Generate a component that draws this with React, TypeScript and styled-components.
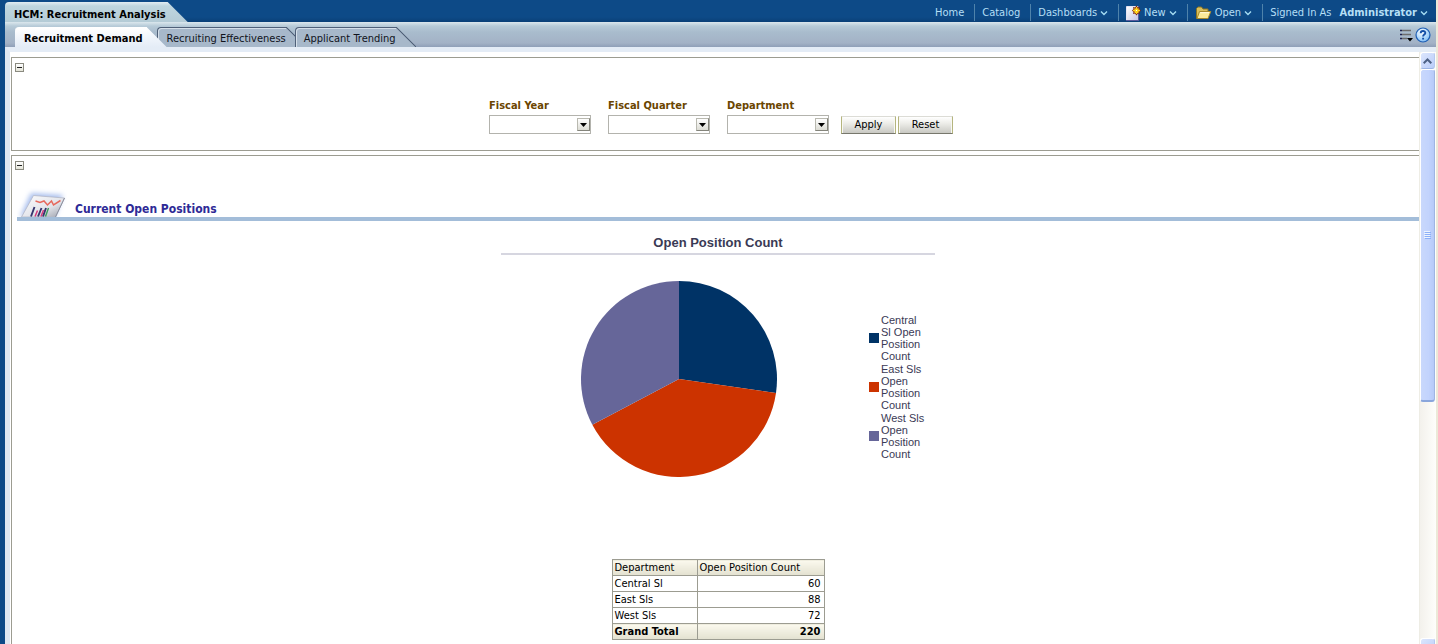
import React from "react";
import styled, { createGlobalStyle, css } from "styled-components";

const uiFont = '"DejaVu Sans Condensed", "DejaVu Sans", sans-serif';
const chartFont = '"Liberation Sans", Arial, sans-serif';

const GlobalStyle = createGlobalStyle`
  * { box-sizing: border-box; }
  html, body, #root { height: 100%; }
  body {
    margin: 0;
    overflow: hidden;
    background: #fff;
    color: #000;
    font: 11px/14px ${uiFont};
  }
  button, select { font: inherit; color: inherit; }
  h1, h2, h3 { margin: 0; font-weight: bold; }
`;

const Page = styled.div`
  display: flex;
  flex-direction: column;
  height: 100%;
  padding-left: 5px;
  border-right: 2px solid #ece9d8;
  background: #0d4a87;
`;

/* ---------- header ---------- */

const Header = styled.header`
  display: flex;
  justify-content: space-between;
  align-items: flex-end;
  height: 22px;
  background: linear-gradient(#0d4a87 17px, #0a4077);
`;

const DashboardTitle = styled.h1`
  height: 20px;
  padding: 6px 22px 0 9px;
  border-top-left-radius: 4px;
  background: linear-gradient(#e2edf2, #bfd6df 4px, #b4cbd6);
  clip-path: polygon(0 0, calc(100% - 20px) 0, 100% 100%, 0 100%);
  font-size: 11px;
  line-height: 14px;
`;

const Nav = styled.nav`
  display: flex;
  align-items: center;
  height: 17px;
  margin-bottom: 1px;
  color: #b5dff5;
`;

const NavItem = styled.div`
  display: flex;
  align-items: center;
  gap: 4px;
  height: 17px;
  padding: 0 10px 0 7px;
  border-left: 1px solid #4f83ab;

  &:first-child { border-left: 0; }
  &:last-child { padding-right: 8px; }
`;

const NavLink = styled.a`
  color: inherit;
  text-decoration: none;
`;

const NavButton = styled.button<{ $strong?: boolean }>`
  display: flex;
  align-items: center;
  gap: 3px;
  padding: 0;
  border: 0;
  background: none;
  font-weight: ${(p) => (p.$strong ? "bold" : "normal")};
  ${(p) => p.$strong && css`margin-left: 4px;`}
`;

/* ---------- tabs ---------- */

const TabBar = styled.div`
  display: flex;
  justify-content: space-between;
  align-items: flex-end;
  height: 25px;
  padding: 0 5px 0 10px;
  background: linear-gradient(#dbe7ed, #b7cbd8 4px, #a9bccd 10px, #a3b2c6 21px, #8f9fb8);
`;

const Tabs = styled.nav`
  display: flex;
  align-items: flex-end;
`;

const slant = css`
  &::after {
    content: "";
    position: absolute;
    top: -1px;
    left: 100%;
    width: 20px;
    height: 20px;
  }
`;

const ActiveTab = styled.a`
  position: relative;
  z-index: 2;
  height: 20px;
  padding: 4px 4px 0 9px;
  border-top: 1px solid #fff;
  border-top-left-radius: 4px;
  background: linear-gradient(#fff, #f0f5fb 10px, #e4ecf6);
  color: #000;
  font-weight: bold;
  text-decoration: none;
  ${slant}
  &::after {
    background: linear-gradient(#fff, #f0f5fb 10px, #e4ecf6);
    clip-path: polygon(0 0, 100% 100%, 0 100%);
  }
`;

const Tab = styled.a<{ $first?: boolean }>`
  position: relative;
  height: 20px;
  margin-left: ${(p) => (p.$first ? 10 : 9)}px;
  padding: 4px 0 0 ${(p) => (p.$first ? 9 : 8)}px;
  border-top: 1px solid #4f6078;
  border-left: 1px solid #4f6078;
  border-top-left-radius: 4px;
  background: #a7b8ca;
  box-shadow: inset 1px 1px 0 #d5dfe9;
  color: #10131c;
  text-decoration: none;
  ${slant}
  &::after {
    background: linear-gradient(to top right, #a7b8ca 47%, #4f6078 49%, #4f6078 51%, transparent 53%);
  }
`;

const Tools = styled.div`
  display: flex;
  align-items: center;
  gap: 2px;
  height: 24px;
`;

const IconButton = styled.button`
  display: flex;
  padding: 0;
  border: 0;
  background: none;
`;

/* ---------- body ---------- */

const Body = styled.div`
  display: flex;
  flex: 1;
  min-height: 0;
  border-top: 5px solid #e4ecf6;
  border-left: 5px solid #dfe8f2;
  background: #fff;
`;

const Content = styled.main`
  display: flex;
  flex-direction: column;
  flex: 1;
  gap: 4px;
  min-width: 0;
  padding: 5px 0 0 1px;
  overflow: hidden;
`;

const Section = styled.section<{ $grow?: boolean }>`
  flex: ${(p) => (p.$grow ? "1 0 auto" : "0 0 94px")};
  padding: 5px 0 ${(p) => (p.$grow ? 24 : 0)}px 5px;
  border: 1px solid #9c9c91;
  border-right: 0;
`;

const Collapse = styled.button`
  display: block;
  width: 9px;
  height: 9px;
  margin-left: -2px;
  padding: 0;
  border: 1px solid #8a8a80;
  background: linear-gradient(#fff, #e4e4d8);

  &::before {
    content: "";
    display: block;
    height: 1px;
    margin: 0 1px;
    background: #222;
  }
`;

const PromptForm = styled.form`
  display: flex;
  justify-content: center;
  align-items: flex-end;
  margin: 27px 0 0 8px;
`;

const Field = styled.div`
  display: flex;
  flex-direction: column;
  gap: 2px;
  width: 102px;
  margin-right: 17px;

  &:nth-child(3) { margin-right: 12px; }
`;

const FieldLabel = styled.label`
  color: #6b4500;
  font-weight: bold;
`;

const SelectBox = styled.div`
  position: relative;
  height: 19px;
`;

const Select = styled.select`
  appearance: none;
  display: block;
  width: 100%;
  height: 19px;
  padding: 0 18px 0 3px;
  border: 1px solid #b3b3ad;
  border-radius: 0;
  background: #fff;
`;

const SelectArrow = styled.span`
  position: absolute;
  top: 3px;
  right: 1px;
  display: flex;
  align-items: center;
  justify-content: center;
  width: 13px;
  height: 13px;
  border: 1px solid #b9b9b0;
  border-right-color: #85857c;
  border-bottom-color: #85857c;
  background: linear-gradient(#fff, #dcdcd4);
  pointer-events: none;
`;

const PushButton = styled.button`
  width: 55px;
  height: 18px;
  margin-right: 2px;
  padding: 0;
  border: 1px solid #dcdcd6;
  border-right-color: #b5b57e;
  border-bottom-color: #77776c;
  border-left-color: #b5b57e;
  background: linear-gradient(#fff, #eeeeea 6px, #c9c9c3);
  box-shadow: inset 1px 0 0 #f8f8f4, inset -1px 0 0 #f8f8f4;
`;

const SectionHeading = styled.div`
  display: flex;
  align-items: flex-end;
  gap: 8px;
  height: 51px;
  border-bottom: 4px solid #a3bdd9;
`;

const HeadingText = styled.h2`
  color: #2e2a96;
  font-size: 12px;
  line-height: 15px;
`;

const Chart = styled.figure`
  width: 434px;
  margin: 14px auto 0;
  font-family: ${chartFont};
  color: #3a3a55;
`;

const ChartTitle = styled.h3`
  padding-bottom: 2px;
  border-bottom: 2px solid #d6d6e0;
  font-size: 13px;
  line-height: 16px;
  text-align: center;
`;

const ChartBody = styled.div`
  display: flex;
  align-items: flex-start;
  padding: 26px 0 0 80px;
`;

const Legend = styled.ul`
  width: 66px;
  margin: 32px 0 0 92px;
  padding: 0;
  list-style: none;
`;

const LegendItem = styled.li`
  display: flex;
  align-items: center;
  gap: 2px;
  height: 49px;
  line-height: 12px;
`;

const Swatch = styled.span<{ $color: string }>`
  flex: none;
  width: 10px;
  height: 10px;
  background: ${(p) => p.$color};
`;

const LegendText = styled.span`
  width: 46px;
`;

const DataTable = styled.table`
  width: 212px;
  margin: 82px auto 0;
  border-collapse: collapse;
  table-layout: fixed;
`;

const Cell = styled.td<{ $numeric?: boolean }>`
  width: ${(p) => (p.$numeric ? 127 : 85)}px;
  height: 16px;
  padding: 1px 3px 0 2px;
  border: 1px solid #9c9c91;
  background: #fff;
  line-height: 14px;
  text-align: ${(p) => (p.$numeric ? "right" : "left")};
  white-space: nowrap;

  thead & {
    background: linear-gradient(#fbf9ee, #e3e1d0);
    font-weight: normal;
    text-align: left;
  }
  tfoot & {
    background: linear-gradient(#fbf9ee, #e3e1d0);
    font-weight: bold;
  }
`;

/* ---------- scrollbar ---------- */

const ScrollBar = styled.div`
  display: flex;
  flex-direction: column;
  flex: none;
  width: 17px;
  padding-right: 1px;
  overflow: hidden;
  border-left: 1px solid #eeede5;
  background: linear-gradient(to right, #f3f1ec, #fefefb);
`;

const ScrollArrow = styled.div`
  display: flex;
  align-items: center;
  justify-content: center;
  flex: none;
  height: 17px;
  border: 1px solid #fff;
  border-right-color: #b4c8f0;
  border-bottom-color: #9cb4e4;
  border-radius: 3px;
  background: linear-gradient(135deg, #dce6fd, #bacdf9);
`;

const ScrollThumb = styled.div`
  display: flex;
  align-items: center;
  justify-content: center;
  flex: 332;
  border: 1px solid #fff;
  border-right-color: #9fb5e3;
  border-bottom: 2px solid #8aa6dc;
  border-radius: 3px;
  background: linear-gradient(to right, #c9d8fc, #c2d3fd 60%, #b6caf8);
`;

const ScrollTrack = styled.div`
  flex: 237;
`;

const ScrollEnd = styled(ScrollArrow)`
  margin-bottom: -11px;
`;

/* ---------- drawings ---------- */

const Chevron = () => (
  <svg width="8" height="6" viewBox="0 0 8 6" fill="none" stroke="#a5dcf2" strokeWidth="1.4" aria-hidden="true">
    <path d="M1 1.5 4 4.5 7 1.5" />
  </svg>
);

const NewIcon = () => (
  <svg width="15" height="16" viewBox="0 0 15 16" aria-hidden="true">
    <defs>
      <linearGradient id="sheet" x1="0" y1="0" x2="1" y2="1">
        <stop offset="0" stopColor="#fff" />
        <stop offset="1" stopColor="#c3c3e2" />
      </linearGradient>
    </defs>
    <path d="M.5 1.500h12v14h-12z" fill="url(#sheet)" stroke="#5a5a9c" />
    <path d="M.5 15V1.500H12" fill="none" stroke="#e4e4f4" />
    <path d="m10.500.5 1.500 2 2-.5-.5 2 1.500 1.500-1.500 1.500.5 2-2-.5-1.500 2-1.500-2-2 .5.5-2-1.500-1.500L7.500 4 7 2l2 .5z" fill="#7c2410" />
    <path d="M10.500 2v7M7 5.500h7M8.500 3.500l4 4M12.500 3.500l-4 4" stroke="#ffd21c" strokeWidth="1.300" />
    <path d="M10 5h1v1h-1z" fill="#fff" />
  </svg>
);

const FolderIcon = () => (
  <svg width="17" height="14" viewBox="0 0 17 14" aria-hidden="true">
    <path d="M1.500 12.500V2.500L3 1h3.500L8 3h5v3" fill="#d9c05e" stroke="#8d7522" />
    <path d="M2 12.500 4.500 5.500h11.300l-2.800 7z" fill="#fbea98" stroke="#a88a2c" strokeLinejoin="round" />
    <path d="M5.200 6.700H14" stroke="#fffbe0" />
  </svg>
);

const OptionsIcon = () => (
  <svg width="14" height="13" viewBox="0 0 14 13" aria-hidden="true">
    <path d="M1 1.500h2M1 5.500h2M1 9.500h2" stroke="#1e2350" strokeWidth="1.500" />
    <path d="M3 1.500h9M3 5.500h9M3 9.500h5" stroke="#6c6c6c" strokeWidth="1.500" />
    <path d="M8 9h6l-3 3.500z" fill="#000" />
  </svg>
);

const HelpIcon = () => (
  <svg width="16" height="16" viewBox="0 0 16 16" aria-hidden="true">
    <defs>
      <radialGradient id="help" cx=".4" cy=".3" r=".8">
        <stop offset="0" stopColor="#fff" />
        <stop offset=".6" stopColor="#a8d4fb" />
        <stop offset="1" stopColor="#6fb0f0" />
      </radialGradient>
    </defs>
    <circle cx="8" cy="8" r="7" fill="url(#help)" stroke="#1f5fb4" strokeWidth="1.200" />
    <path d="M5.700 6.200C5.700 3.300 10.400 3.400 10.300 6c0 1.500-2.200 1.700-2.200 3.400M8.100 10.700v1.800" fill="none" stroke="#1550a8" strokeWidth="1.900" />
  </svg>
);

const ReportIcon = () => (
  <svg width="50" height="29" viewBox="0 0 50 29" aria-hidden="true">
    <defs>
      <filter id="glow" x="-20%" y="-20%" width="140%" height="140%">
        <feGaussianBlur stdDeviation="2.4" />
      </filter>
      <linearGradient id="paper" x1="0" y1="0" x2="1" y2="1">
        <stop offset="0" stopColor="#fdfdfe" />
        <stop offset=".6" stopColor="#e2e4ea" />
        <stop offset="1" stopColor="#9a9eaa" />
      </linearGradient>
    </defs>
    <path d="M14 5 46 7 38 29H3z" fill="#a9bfee" filter="url(#glow)" />
    <path d="M16.500 7.500 47.500 10 38.500 29H4.500z" fill="url(#paper)" stroke="#b4b8c6" strokeWidth=".8" />
    <path d="M47.500 10 38.500 29" stroke="#8a8e9c" />
    <path d="m18.500 13 4.500 1.500 4-1.500 3.500 4 4-4 2 4 7-4.500" fill="none" stroke="#e66a5e" strokeWidth="1.500" />
    <path d="m17.500 19-3.500 9.500M24.500 20l-3.500 8.500M29 20l-3 8.500" stroke="#35356e" strokeWidth="1.900" />
    <path d="m20.500 22.500-2.500 6M26.500 22l-2.500 6.500" stroke="#d43a7c" strokeWidth="1.500" />
    <path d="m31.500 20-3 8.500" stroke="#3d9a5c" strokeWidth="1.400" />
  </svg>
);

/* ---------- data ---------- */

const departments = [
  { name: "Central Sl", count: 60, color: "#003366" },
  { name: "East Sls", count: 88, color: "#cc3300" },
  { name: "West Sls", count: 72, color: "#666699" },
];
const total = departments.reduce((sum, d) => sum + d.count, 0);

const PieChart = () => {
  const r = 98;
  const point = (share: number) => {
    const angle = share * 2 * Math.PI;
    return `${r + r * Math.sin(angle)} ${r - r * Math.cos(angle)}`;
  };
  let sum = 0;
  return (
    <svg width="196" height="196" viewBox="0 0 196 196" role="img" aria-label="Open Position Count">
      {departments.map((d) => {
        const start = sum / total;
        sum += d.count;
        return (
          <path key={d.name} fill={d.color} d={`M${r} ${r}L${point(start)}A${r} ${r} 0 0 1 ${point(sum / total)}Z`} />
        );
      })}
    </svg>
  );
};

const prompts = [
  { id: "year", label: "Fiscal Year" },
  { id: "quarter", label: "Fiscal Quarter" },
  { id: "department", label: "Department" },
];

export default function App() {
  return (
    <Page>
      <GlobalStyle />
      <Header>
        <DashboardTitle>HCM: Recruitment Analysis</DashboardTitle>
        <Nav>
          <NavItem><NavLink href="#home">Home</NavLink></NavItem>
          <NavItem><NavLink href="#catalog">Catalog</NavLink></NavItem>
          <NavItem><NavButton>Dashboards <Chevron /></NavButton></NavItem>
          <NavItem><NavButton><NewIcon />New <Chevron /></NavButton></NavItem>
          <NavItem><NavButton><FolderIcon />Open <Chevron /></NavButton></NavItem>
          <NavItem>
            <span>Signed In As</span>
            <NavButton $strong>Administrator <Chevron /></NavButton>
          </NavItem>
        </Nav>
      </Header>
      <TabBar>
        <Tabs>
          <ActiveTab href="#demand">Recruitment Demand</ActiveTab>
          <Tab href="#effectiveness" $first>Recruiting Effectiveness</Tab>
          <Tab href="#trending">Applicant Trending</Tab>
        </Tabs>
        <Tools>
          <IconButton aria-label="Page options"><OptionsIcon /></IconButton>
          <IconButton aria-label="Help"><HelpIcon /></IconButton>
        </Tools>
      </TabBar>
      <Body>
        <Content>
          <Section>
            <Collapse aria-label="Collapse filters" />
            <PromptForm onSubmit={(e) => e.preventDefault()}>
              {prompts.map((p) => (
                <Field key={p.id}>
                  <FieldLabel htmlFor={p.id}>{p.label}</FieldLabel>
                  <SelectBox>
                    <Select id={p.id}><option value="" /></Select>
                    <SelectArrow>
                      <svg width="7" height="4" viewBox="0 0 7 4" aria-hidden="true"><path d="M0 0h7L3.500 4z" /></svg>
                    </SelectArrow>
                  </SelectBox>
                </Field>
              ))}
              <PushButton type="submit">Apply</PushButton>
              <PushButton type="reset">Reset</PushButton>
            </PromptForm>
          </Section>
          <Section $grow>
            <Collapse aria-label="Collapse open positions" />
            <SectionHeading>
              <ReportIcon />
              <HeadingText>Current Open Positions</HeadingText>
            </SectionHeading>
            <Chart>
              <ChartTitle>Open Position Count</ChartTitle>
              <ChartBody>
                <PieChart />
                <Legend>
                  {departments.map((d) => (
                    <LegendItem key={d.name}>
                      <Swatch $color={d.color} />
                      <LegendText>{`${d.name} Open Position Count`}</LegendText>
                    </LegendItem>
                  ))}
                </Legend>
              </ChartBody>
            </Chart>
            <DataTable>
              <thead>
                <tr>
                  <Cell as="th" scope="col">Department</Cell>
                  <Cell as="th" scope="col" $numeric>Open Position Count</Cell>
                </tr>
              </thead>
              <tbody>
                {departments.map((d) => (
                  <tr key={d.name}>
                    <Cell>{d.name}</Cell>
                    <Cell $numeric>{d.count}</Cell>
                  </tr>
                ))}
              </tbody>
              <tfoot>
                <tr>
                  <Cell>Grand Total</Cell>
                  <Cell $numeric>{total}</Cell>
                </tr>
              </tfoot>
            </DataTable>
          </Section>
        </Content>
        <ScrollBar aria-hidden="true">
          <ScrollArrow>
            <svg width="9" height="6" viewBox="0 0 9 6" fill="none" stroke="#4d6185" strokeWidth="2"><path d="M.7 5.200 4.500 1.500l3.800 3.700" /></svg>
          </ScrollArrow>
          <ScrollThumb>
            <svg width="7" height="8" viewBox="0 0 7 8"><path d="M0 .5h6M0 2.500h6M0 4.500h6M0 6.500h6" stroke="#eef4fe" /><path d="M1 1.500h6M1 3.500h6M1 5.500h6M1 7.500h6" stroke="#8cb0f8" /></svg>
          </ScrollThumb>
          <ScrollTrack />
          <ScrollEnd />
        </ScrollBar>
      </Body>
    </Page>
  );
}
